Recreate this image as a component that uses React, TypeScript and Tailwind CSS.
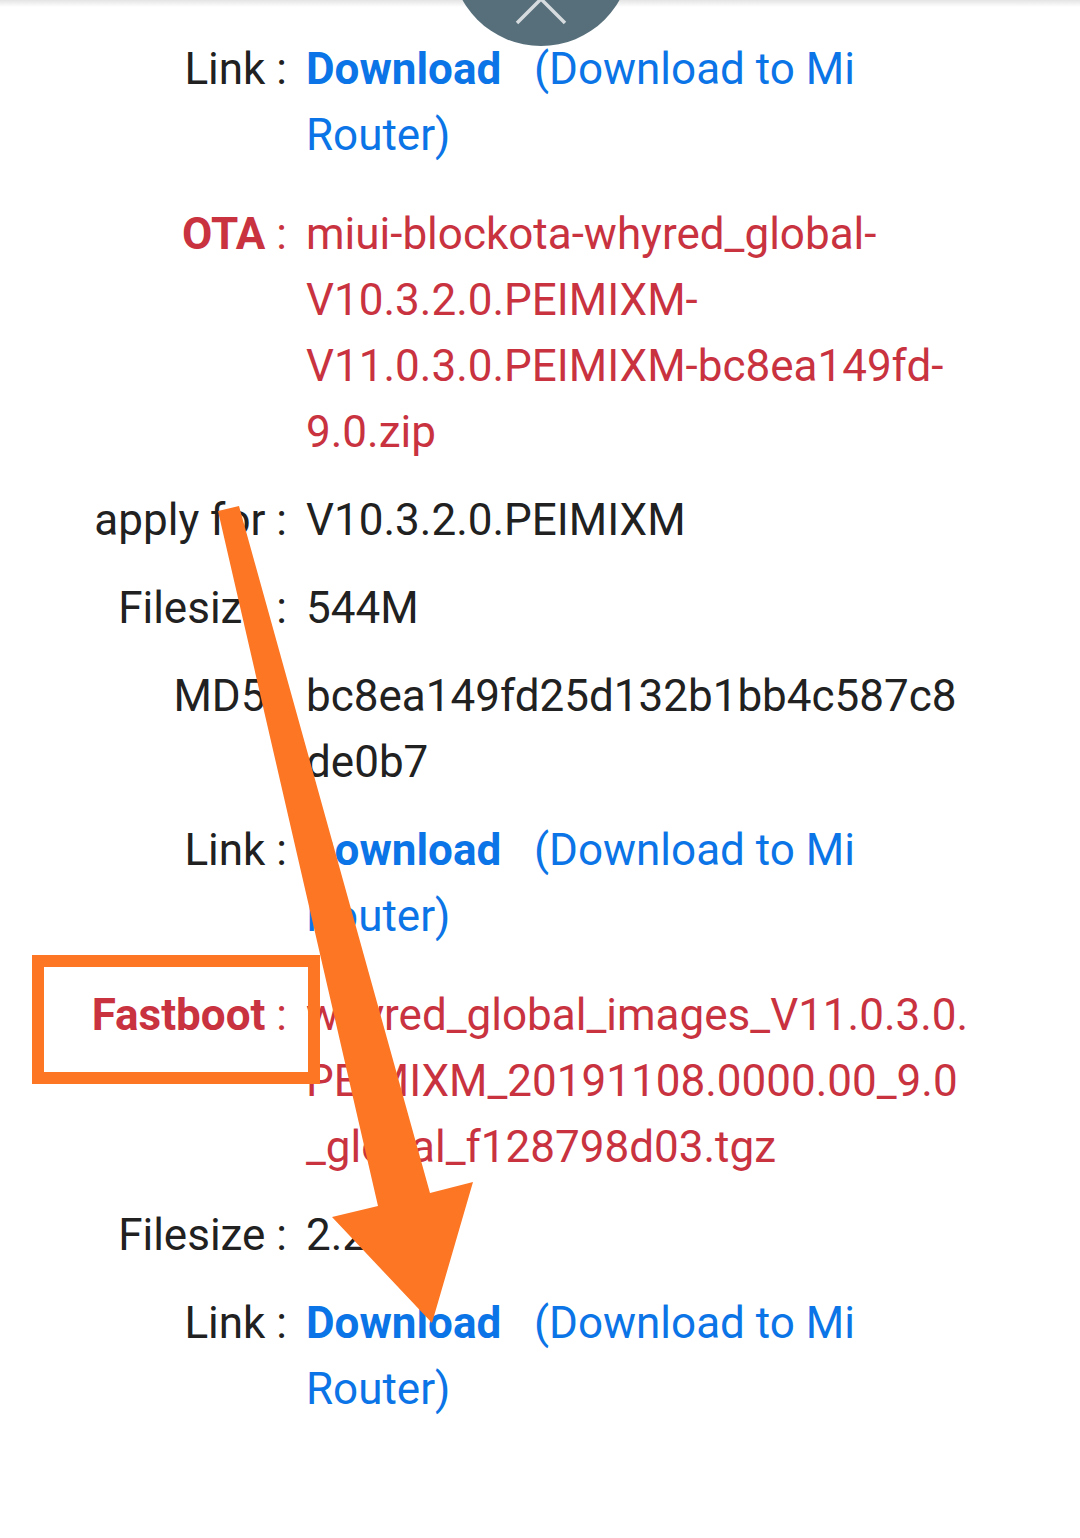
import type { ReactNode } from "react";

type Tone = "plain" | "red" | "blue";

type RowProps = {
  label: string;
  tone?: Tone;
  labelTone?: Tone;
  spaced?: boolean;
  children: ReactNode;
};

const toneClass: Record<Tone, string> = {
  plain: "text-[#212121]",
  red: "text-[#c9323f]",
  blue: "text-[#0b74e6]",
};

function Row({ label, tone = "plain", labelTone = "plain", spaced = false, children }: RowProps) {
  return (
    <div
      className={`grid grid-cols-[287px_664px] gap-x-[19px] ${spaced ? "mt-[33px]" : "mt-[22px]"}`}
    >
      <div className={`text-right ${toneClass[labelTone]}`}>
        <span className={labelTone === "red" ? "font-bold" : ""}>{label}</span> :
      </div>
      <div className={`[overflow-wrap:anywhere] ${toneClass[tone]}`}>{children}</div>
    </div>
  );
}

function LinkRow() {
  return (
    <Row label="Link" tone="blue">
      <b>Download</b>
      {"\u00a0\u00a0 (Download to Mi Router)"}
    </Row>
  );
}

export default function App() {
  return (
    <div className="relative min-h-[1538px] w-[1080px] overflow-hidden bg-white font-['Roboto','Noto_Sans',sans-serif] text-[44px] leading-[66px]">
      <div className="absolute left-0 right-0 top-0 h-[7px] bg-gradient-to-b from-[#e4e4e4] to-white" />

      <div className="flex flex-col pt-[14px]">
        <LinkRow />
        <Row label="OTA" tone="red" labelTone="red" spaced>
          miui-blockota-whyred_global-V10.3.2.0.PEIMIXM-V11.0.3.0.PEIMIXM-bc8ea149fd-9.0.zip
        </Row>
        <Row label="apply for">V10.3.2.0.PEIMIXM</Row>
        <Row label="Filesize">544M</Row>
        <Row label="MD5">bc8ea149fd25d132b1bb4c587c8de0b7</Row>
        <LinkRow />
        <Row label="Fastboot" tone="red" labelTone="red" spaced>
          whyred_global_images_V11.0.3.0.PEIMIXM_20191108.0000.00_9.0_global_f128798d03.tgz
        </Row>
        <Row label="Filesize">2.2G</Row>
        <LinkRow />
      </div>

      {/* scroll-to-top button, cut off by the top edge */}
      <div className="absolute left-[451px] top-[-134px] flex h-[180px] w-[180px] items-end justify-center rounded-full bg-[#566f7a]">
        <svg width="60" height="30" viewBox="0 0 60 30" className="mb-[21px]">
          <path d="M6 28 L30 4 L54 28" fill="none" stroke="#d5dbde" strokeWidth="3.5" />
        </svg>
      </div>

      {/* annotation overlay */}
      <svg
        className="pointer-events-none absolute left-0 top-0"
        width="1080"
        height="1538"
        viewBox="0 0 1080 1538"
      >
        <rect x="38" y="961" width="276" height="117" fill="none" stroke="#fc7624" strokeWidth="12" />
        <polygon
          points="218,511 239,506 430,1193 473,1182 432,1323 332,1217 378,1206"
          fill="#fc7624"
        />
      </svg>
    </div>
  );
}
